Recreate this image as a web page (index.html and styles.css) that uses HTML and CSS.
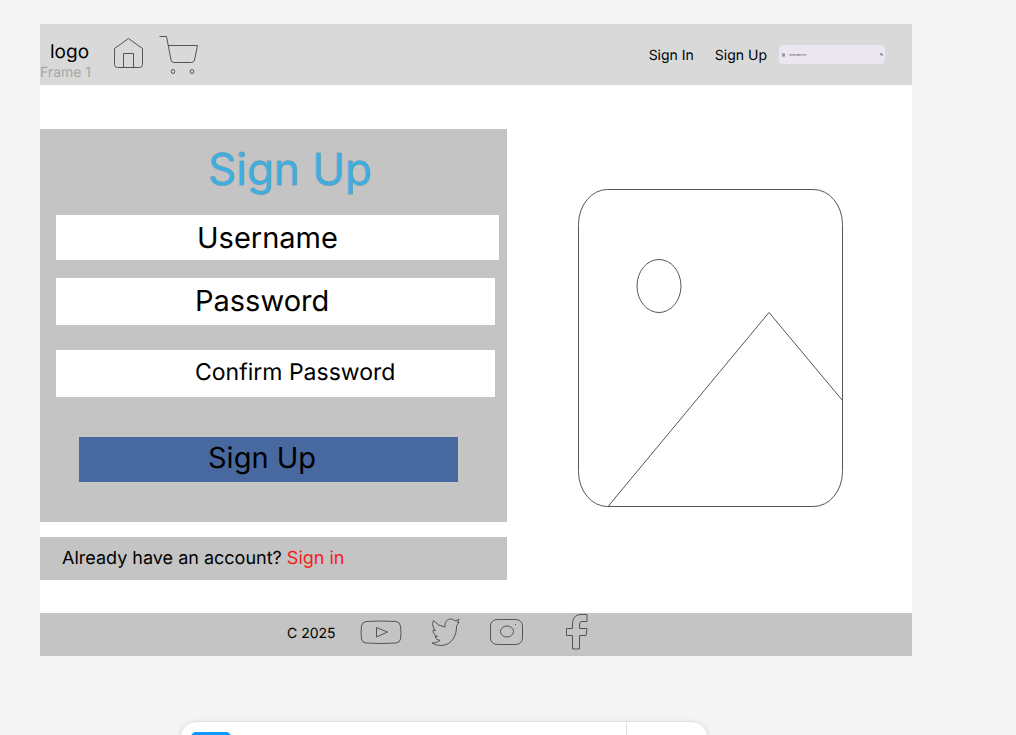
FILE: index.html
```html
<!DOCTYPE html>
<html lang="en">
<head>
<meta charset="utf-8">
<meta name="viewport" content="width=device-width, initial-scale=1">
<title>Sign Up</title>
<link rel="stylesheet" href="styles.css">
</head>
<body>
<div class="frame">
  <header class="header">
    <div class="brand">
      <span class="brand-name">logo</span>
      <span class="brand-caption">Frame 1</span>
    </div>
    <a class="home" href="#" aria-label="Home">
      <svg class="icon" width="32" height="32" viewBox="0 0 32 32"><path d="M1.5 11.5 15.5 1.500 29.500 11.500V27.500a3 3 0 0 1-3 3h-22a3 3 0 0 1-3-3ZM10.500 30.500V16.500h10v14"/></svg>
    </a>
    <a class="cart" href="#" aria-label="Cart">
      <svg class="icon" width="40" height="40" viewBox="0 0 40 40"><path d="M.5 1.500H7.500L12 25q.6 2.500 3 2.500H32.500q2.500 0 3-2.500L38.500 10.500H9"/><ellipse cx="14" cy="36.500" rx="1.800" ry="2"/><ellipse cx="33" cy="36.500" rx="1.800" ry="2"/></svg>
    </a>
    <nav class="nav">
      <a href="#">Sign In</a>
      <a href="#">Sign Up</a>
    </nav>
    <form class="search" role="search">
      <svg width="4" height="4" viewBox="0 0 4 4"><path d="M0 1h3M0 2h3M0 3h3" stroke="#49454f" stroke-width=".6"/></svg>
      <input class="search-input" type="search" placeholder="Hinted search text" aria-label="Search">
      <svg width="4" height="4" viewBox="0 0 4 4"><path d="M1.800 1.800 3 3" stroke="#49454f" stroke-width=".6"/><circle cx="1.200" cy="1.200" r=".8" fill="none" stroke="#49454f" stroke-width=".6"/></svg>
    </form>
  </header>

  <main class="main">
    <div class="column">
      <form class="card">
        <h1 class="title">Sign Up</h1>
        <input class="field field-user" type="text" placeholder="Username" aria-label="Username">
        <input class="field field-password" type="password" placeholder="Password" aria-label="Password">
        <input class="field field-confirm" type="password" placeholder="Confirm Password" aria-label="Confirm Password">
        <button class="submit" type="button">Sign Up</button>
      </form>
      <p class="account">Already have an account? <a href="#">Sign in</a></p>
    </div>
    <div class="picture">
      <svg class="icon" width="265" height="318" viewBox="0 0 265 318" role="img" aria-label="Image placeholder"><rect x=".5" y=".5" width="264" height="317" rx="29" ry="35"/><ellipse cx="81" cy="97" rx="22" ry="26.500"/><path d="M30 317.500 191 123.500 264.500 211.500"/></svg>
    </div>
  </main>

  <footer class="footer">
    <span class="copyright">C 2025</span>
    <a href="#" aria-label="YouTube"><svg class="icon" width="42" height="36" viewBox="0 0 42 36"><path d="M6 7.500Q21 6.500 36 7.500Q40 8 40.500 12Q41.500 18 40.500 25Q40 28.500 36 29Q21 30 6 29Q2 28.500 1.500 25Q.5 18 1.500 12Q2 8 6 7.500ZM16.500 13.500v9.500l11-5Z"/></svg></a>
    <a href="#" aria-label="Twitter"><svg class="icon" width="30" height="36" viewBox="0 0 30 36"><path d="M2.500 6.500Q7.500 12.500 14 13C13.500 8 16 5 20 5Q22.500 5 24 7Q26 6.500 28 5L26.500 8.500 28 8Q27.500 10 25.500 11.500C26 21 21 31.500 10 31.500Q5 31.500 1 29Q6 29 9 26.500Q5 26 4 22.500H6.500Q2 20.500 2 16L4.500 16.500Q0 12 2.500 6.500Z"/></svg></a>
    <a href="#" aria-label="Instagram"><svg class="icon" width="34" height="36" viewBox="0 0 34 36"><rect x=".5" y="5.500" width="32" height="25" rx="7" ry="6"/><ellipse cx="17" cy="17.500" rx="6.500" ry="5.500"/><path d="M25 10.500h1"/></svg></a>
    <a class="facebook" href="#" aria-label="Facebook"><svg class="icon" width="22" height="36" viewBox="0 0 22 36"><path d="M21 .5V7.500H16Q13.500 7.500 13.500 10V14.500H21L20 21.500H13.500V35H6.500V21.500H.5V14.500H6.500V10Q6.500 .5 15 .5Z"/></svg></a>
  </footer>
</div>
<div class="toolbar">
  <div class="tools"><button class="tool" type="button" aria-label="Move"></button></div>
  <div class="modes"></div>
</div>
</body>
</html>
```
FILE: styles.css
```css
* {
  box-sizing: border-box;
}

body {
  margin: 0;
  height: 100vh;
  overflow: hidden;
  padding: 24px 104px 0 40px;
  background: #f4f4f4;
  color: #000;
  font-family: Inter, "Liberation Sans", sans-serif;
  font-size: 14px;
  text-rendering: geometricPrecision;
}

a {
  color: inherit;
  text-decoration: none;
}

svg {
  display: block;
}

.icon {
  fill: none;
  stroke: #555;
  stroke-width: 1;
}

.frame {
  background: #fff;
}

.header {
  display: flex;
  align-items: center;
  height: 61px;
  padding-right: 27px;
  background: #d9d9d9;
}

.brand {
  display: flex;
  flex-direction: column;
  width: 73px;
  padding-top: 12px;
}

.brand-name {
  padding-left: 10px;
  font-size: 19px;
  line-height: 24px;
}

.brand-caption {
  color: #a6a6a6;
  font-size: 14px;
  line-height: 18px;
}

.home {
  padding-bottom: 3px;
}

.cart {
  margin-left: 14px;
}

.nav {
  display: flex;
  gap: 21px;
  margin-left: auto;
  padding-top: 2px;
}

.search {
  display: flex;
  align-items: center;
  gap: 3px;
  width: 106px;
  height: 19px;
  margin-left: 12px;
  padding: 0 1px 0 3px;
  border-radius: 4px;
  background: #ece6f0;
}

.search-input {
  flex: 1;
  min-width: 0;
  padding: 0;
  border: 0;
  background: none;
  font-family: inherit;
  font-size: 2px;
}

.search-input::placeholder {
  color: #49454f;
}

.main {
  display: grid;
  grid-template-columns: minmax(0, 467fr) minmax(0, 405fr);
  padding: 44px 0 33px;
}

.card {
  display: flex;
  flex-direction: column;
  padding: 13px 12px 40px 16px;
  background: #c4c4c4;
}

.title {
  margin: 0 0 18px;
  padding-left: 152px;
  color: #3eaddf;
  font-size: 44px;
  font-weight: 400;
  line-height: 55px;
  -webkit-text-stroke: 1px rgba(50, 80, 95, 0.35);
  paint-order: stroke fill;
}

.field {
  height: 47px;
  padding: 0 0 3px 139px;
  border: 0;
  border-radius: 0;
  background: #fff;
  font-family: inherit;
  font-size: 29px;
  text-rendering: inherit;
}

.field::placeholder {
  color: #000;
  opacity: 1;
}

.field-user {
  height: 45px;
  margin-right: -4px;
  padding: 0 0 0 141px;
}

.field-password {
  margin-top: 18px;
}

.field-confirm {
  margin-top: 25px;
  font-size: 23px;
}

.submit {
  height: 45px;
  margin: 40px 37px 0 23px;
  padding: 0 0 4px 129px;
  border: 0;
  background: #4868a0;
  color: #000;
  font-family: inherit;
  font-size: 29px;
  text-align: left;
  text-rendering: inherit;
}

.account {
  margin: 15px 0 0;
  padding: 1px 22px 0;
  background: #c4c4c4;
  font-size: 18px;
  line-height: 42px;
}

.account a {
  color: #f21d1d;
}

.picture {
  display: flex;
  justify-content: center;
  padding: 60px 0 0 2px;
}

.footer {
  display: flex;
  align-items: flex-start;
  height: 43px;
  gap: 29px;
  padding: 1px 0 0 247px;
  background: #c4c4c4;
}

.copyright {
  margin-right: -5px;
  line-height: 40px;
}

.facebook {
  margin-left: 13px;
}

.toolbar {
  display: flex;
  height: 48px;
  margin: 65px 204px 0 140px;
  border: 1px solid #e2e2e2;
  border-radius: 16px;
  background: #fff;
  box-shadow: 0 1px 5px rgba(0, 0, 0, 0.1);
}

.tools {
  flex: 1;
  padding: 10px;
}

.tool {
  display: block;
  width: 40px;
  height: 32px;
  padding: 0;
  border: 0;
  border-radius: 5px;
  background: #0d99ff;
}

.modes {
  width: 81px;
  border-left: 1px solid #e2e2e2;
}
```
